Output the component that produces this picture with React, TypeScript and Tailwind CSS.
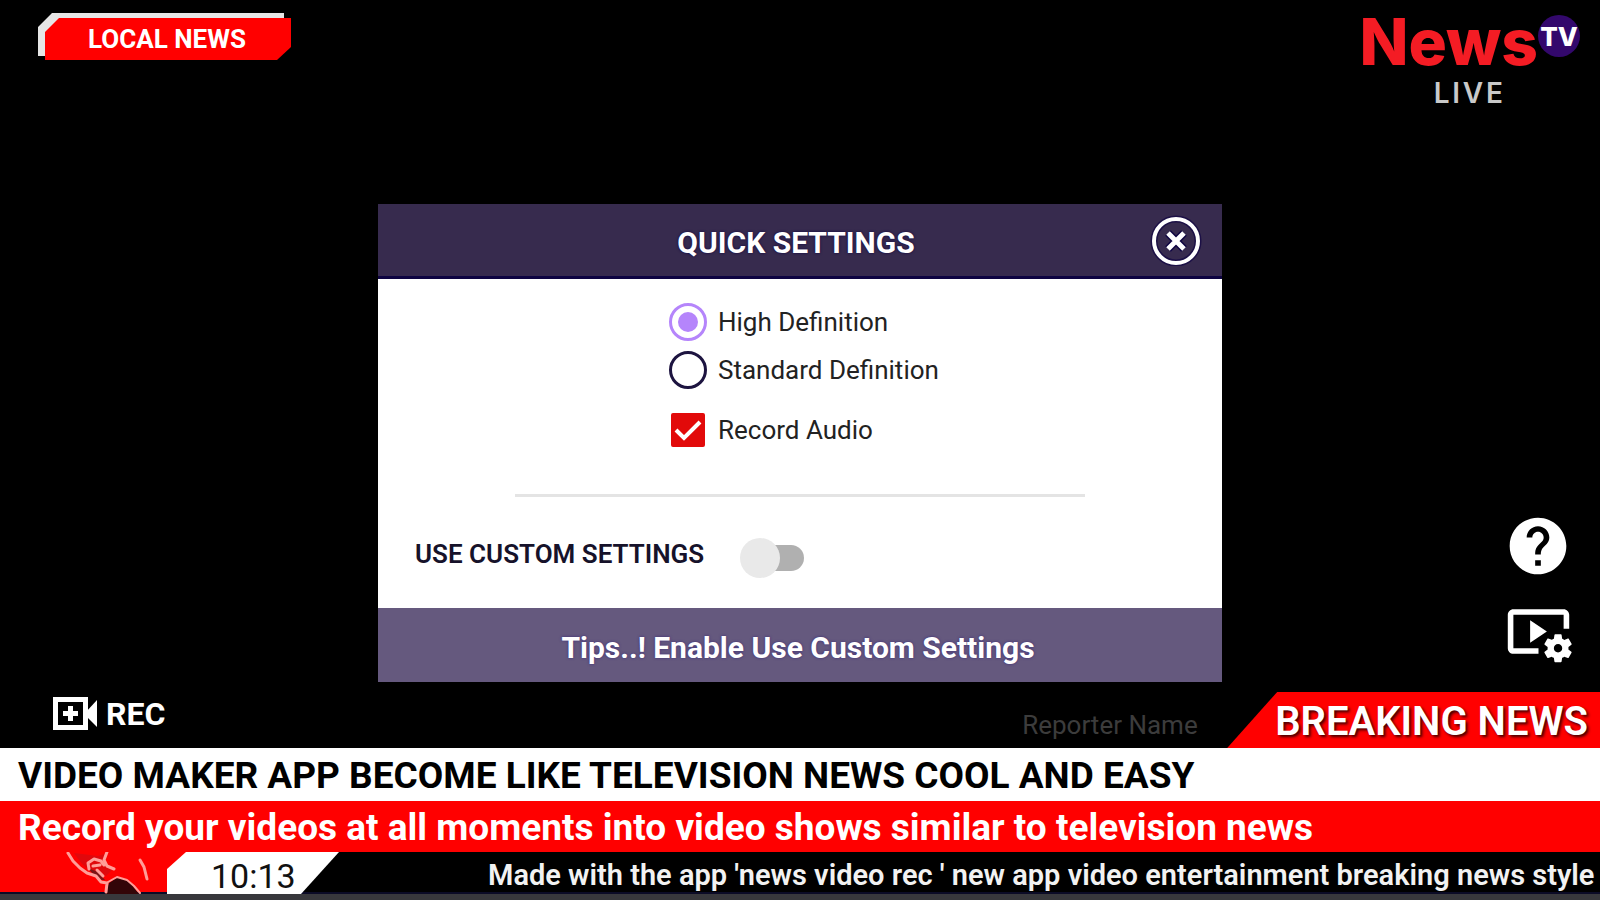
import { useState } from "react";
import { MdHelp, MdVideoSettings } from "react-icons/md";

const qualities = ["High Definition", "Standard Definition"];

function LocalBadge() {
  return (
    <div className="grid">
      <svg
        className="col-start-1 row-start-1"
        width="254"
        height="48"
        viewBox="0 0 254 48"
        aria-hidden="true"
      >
        <path d="M0 43V14L14 0H246V8H20L8 20V43Z" fill="#e6e6e6" />
        <path d="M7 47V19L21 5H253V34L239 47Z" fill="#ff0000" />
      </svg>
      <span className="col-start-1 row-start-1 place-self-center pl-1 pt-1 text-[26px] leading-8 font-bold text-white">
        LOCAL NEWS
      </span>
    </div>
  );
}

function Logo() {
  return (
    <div className="flex flex-col items-center font-['Inter','Liberation_Sans',sans-serif]">
      <div className="flex items-start">
        <span className="text-[64px] leading-[58px] font-extrabold text-[#f41c24]">
          News
        </span>
        <span className="mt-[2px] flex size-[42px] items-center justify-center rounded-full bg-[#33086c] text-[26px] font-extrabold text-white">
          TV
        </span>
      </div>
      <span className="pt-[6px] text-[28px] leading-8 font-semibold tracking-widest text-[#c9c9c9]">
        LIVE
      </span>
    </div>
  );
}

function QuickSettings() {
  const [quality, setQuality] = useState(qualities[0]);
  const [audio, setAudio] = useState(true);
  const [custom, setCustom] = useState(false);

  return (
    <section className="w-full max-w-[844px] bg-white">
      <div className="grid h-[75px] grid-cols-[1fr_auto_1fr] items-center border-b-3 border-[#0e0442] bg-[#372b4e] pr-5 pl-3">
        <h2 className="col-start-2 pt-1 text-[30px] font-bold text-white [text-shadow:0_0_3px_#0e0442]">
          QUICK SETTINGS
        </h2>
        <button type="button" aria-label="Close" className="justify-self-end">
          <svg width="52" height="52" viewBox="0 0 52 52" fill="none">
            <circle cx="26" cy="27" r="22" stroke="#1c1046" strokeWidth="7" />
            <circle cx="26" cy="27" r="22" stroke="#fff" strokeWidth="4" />
            <path d="M18 19L34 35M34 19L18 35" stroke="#0e0442" strokeWidth="8" />
            <path d="M18 19L34 35M34 19L18 35" stroke="#fff" strokeWidth="5" />
          </svg>
        </button>
      </div>

      <div className="flex flex-col pt-[19px] pl-[291px] text-[26px] text-[#222]">
        {qualities.map((q) => (
          <label key={q} className="flex h-12 items-center gap-[11px]">
            <input
              type="radio"
              name="quality"
              checked={quality === q}
              onChange={() => setQuality(q)}
              className="size-[38px] appearance-none rounded-full border-3 border-[#1d1440] bg-clip-content p-[6px] checked:border-[#b585fb] checked:bg-[#b585fb]"
            />
            {q}
          </label>
        ))}
        <label className="mt-3 flex h-12 items-center gap-[11px]">
          <span className="grid size-[38px] place-items-center">
            <input
              type="checkbox"
              checked={audio}
              onChange={(e) => setAudio(e.target.checked)}
              className="peer col-start-1 row-start-1 size-[34px] appearance-none rounded-xs border-3 border-[#e20a0a] checked:bg-[#e20a0a]"
            />
            <svg
              className="pointer-events-none invisible col-start-1 row-start-1 peer-checked:visible"
              width="34"
              height="34"
              viewBox="0 0 34 34"
              fill="none"
            >
              <path d="M5 17L13 25L29 9" stroke="#fff" strokeWidth="4" />
            </svg>
          </span>
          Record Audio
        </label>
      </div>

      <hr className="mx-auto mt-10 w-[570px] border-t-3 border-[#e4e4e4]" />

      <label className="flex h-[111px] items-center gap-9 pt-1 pl-[37px] text-[26px] font-semibold text-[#16122a]">
        USE CUSTOM SETTINGS
        <span className="grid h-[41px] w-16 items-center pt-1">
          <span className="col-start-1 row-start-1 ml-3 h-[26px] rounded-full bg-[#b0b0b0]" />
          <input
            type="checkbox"
            role="switch"
            checked={custom}
            onChange={(e) => setCustom(e.target.checked)}
            className="col-start-1 row-start-1 size-10 appearance-none rounded-full bg-[#e9e9e9] checked:justify-self-end checked:bg-[#b585fb]"
          />
        </span>
      </label>

      <p className="flex h-[74px] items-center justify-center bg-[#65597e] pt-1 pr-1 text-[30px] font-bold text-white [text-shadow:0_0_3px_#3a2a78]">
        Tips..! Enable Use Custom Settings
      </p>
    </section>
  );
}

function SideTools() {
  return (
    <div className="flex flex-col items-center gap-[18px] justify-self-end pr-[28px] pb-[17px] text-white">
      <button type="button" aria-label="Help">
        <MdHelp size={68} />
      </button>
      <button type="button" aria-label="Video settings">
        <MdVideoSettings size={67} />
      </button>
    </div>
  );
}

function RecButton() {
  return (
    <button
      type="button"
      className="flex items-center gap-2 pt-[2px] pl-[53px] text-[32px] leading-10 font-bold text-white"
    >
      <svg width="45" height="34" viewBox="0 0 45 34" aria-hidden="true">
        <path
          d="M2.500 2.500H32.500V30.500H2.500Z"
          fill="none"
          stroke="#fff"
          strokeWidth="5"
        />
        <path d="M17.500 9V24M10 16.500H25" stroke="#fff" strokeWidth="5" />
        <path d="M33 15L44 3V30L33 19Z" fill="#fff" />
      </svg>
      REC
    </button>
  );
}

function Clock() {
  return (
    <div className="flex bg-[#ff0000]">
      <svg width="167" height="42" viewBox="0 0 167 42" aria-hidden="true">
        <path d="M74 1L98 4L107 1L104 8L112 18L106 24L92 20L82 12Z" fill="#e0080c" />
        <path d="M105 42L109 31L118 25L128 28L139 42Z" fill="#330508" />
        <path d="M88 16L98 20L105 28L98 28Z" fill="#7c1416" />
        <g
          fill="none"
          stroke="#ff9d98"
          strokeWidth="3"
          strokeLinecap="round"
          strokeLinejoin="round"
        >
          <path d="M68 1L73 9L80 16L87 21L96 24L101 30L107 31L106 40" />
          <path d="M107 0L104 8L107 14L114 17" />
          <path d="M89 17L88 11L94 7L101 9L104 13M93 14L100 13" />
          <path d="M97 18L103 24" />
          <path d="M108 30L117 25L127 28L134 34L140 41" strokeWidth="2" />
          <path d="M140 8L144 15L147 27" />
        </g>
      </svg>
      <div className="grid bg-black">
        <svg
          className="col-start-1 row-start-1"
          width="172"
          height="42"
          viewBox="0 0 172 42"
          aria-hidden="true"
        >
          <path d="M0 0H22L0 18Z" fill="#ff0000" />
          <path d="M0 42V17L19 0H172L134 42Z" fill="#fff" />
        </svg>
        <time className="col-start-1 row-start-1 self-center pt-1 pl-11 text-[34px] leading-10 text-[#111]">
          10:13
        </time>
      </div>
    </div>
  );
}

export default function App() {
  return (
    <div className="flex min-h-screen flex-col overflow-hidden bg-black font-['Roboto','Liberation_Sans',sans-serif]">
      <header className="flex items-start justify-between pt-[13px] pr-[20px] pl-[38px]">
        <LocalBadge />
        <Logo />
      </header>

      <main className="grid flex-1 grid-cols-[1fr_minmax(0,844px)_1fr] items-end pb-[10px]">
        <div className="col-start-2">
          <QuickSettings />
        </div>
        <SideTools />
      </main>

      <footer className="whitespace-nowrap">
        <div className="flex h-14 items-start justify-between">
          <RecButton />
          <div className="flex h-full">
            <input
              type="text"
              aria-label="Reporter Name"
              placeholder="Reporter Name"
              className="w-[205px] bg-transparent pt-[10px] text-[26px] text-white outline-none placeholder:text-[#3c3c3c]"
            />
            <div className="flex items-center bg-[#ff0000] pt-1 pr-3 pl-12 text-[40px] font-semibold text-white [clip-path:polygon(50px_0,100%_0,100%_100%,0_100%)] [text-shadow:2px_2px_3px_#400]">
              BREAKING NEWS
            </div>
          </div>
        </div>
        <h1 className="h-[53px] bg-white pl-[18px] text-[37px] leading-[56px] font-bold text-black">
          VIDEO MAKER APP BECOME LIKE TELEVISION NEWS COOL AND EASY
        </h1>
        <p className="h-[51px] bg-[#ff0000] pl-[18px] text-[37px] leading-[54px] font-bold text-white">
          Record your videos at all moments into video shows similar to television news
        </p>
        <div className="flex h-[42px] border-b-2 border-[#0b0b26] bg-black">
          <Clock />
          <p className="flex-1 overflow-hidden pl-[149px] text-[29px] leading-[46px] font-semibold text-[#f2f2f2]">
            Made with the app 'news video rec ' new app video entertainment breaking news style w
          </p>
        </div>
        <div className="h-[6px] bg-[#38383c]" />
      </footer>
    </div>
  );
}
